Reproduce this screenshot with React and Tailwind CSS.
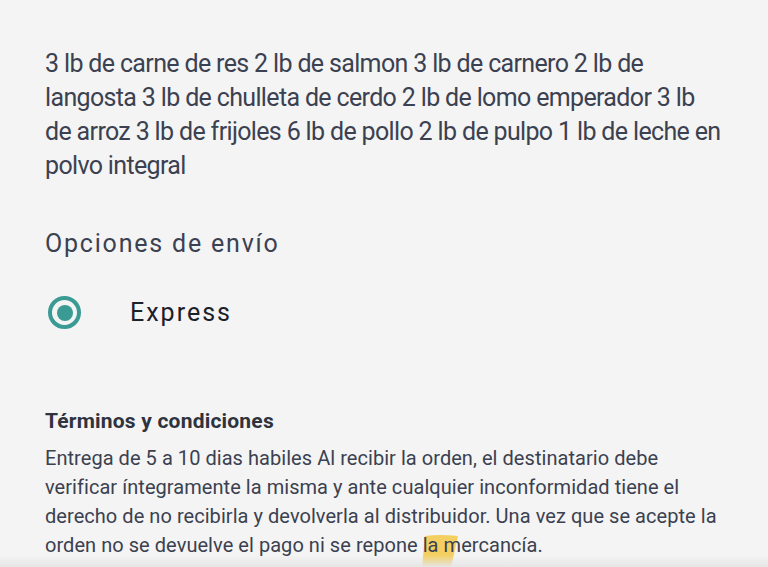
export default function App() {
  return (
    <div className="relative w-[768px] h-[567px] overflow-hidden bg-[#f4f4f4]" style={{ fontFamily: 'Roboto, "Noto Sans", sans-serif' }}>
      <svg className="absolute left-[418px] top-[534px]" width="45" height="33" viewBox="0 0 45 33">
        <path d="M7 2 Q22 0 40 2 L33 33 L4 33 Z" fill="#f2c53d" fillOpacity="0.8" />
      </svg>
      <div className="relative pl-[45px] pr-[44px] pt-[47px]">
        <p className="text-[25px] leading-[34px] text-[#3b4150] tracking-[-0.65px]">
          3 lb de carne de res 2 lb de salmon 3 lb de carnero 2 lb de langosta 3 lb de chulleta de cerdo 2 lb de lomo emperador 3 lb de arroz 3 lb de frijoles 6 lb de pollo 2 lb de pulpo 1 lb de leche en polvo integral
        </p>
        <h2 className="mt-[46px] text-[25px] leading-[30px] tracking-[1.8px] text-[#3b4150]">Opciones de envío</h2>
        <div className="mt-[37px] flex items-center">
          <div className="w-[33px] h-[33px] ml-[3px] rounded-full border-[4px] border-[#3a9a94] flex items-center justify-center">
            <div className="w-[16px] h-[16px] rounded-full bg-[#3a9a94]" />
          </div>
          <span className="ml-[49px] text-[25px] leading-[30px] tracking-[2px] text-[#1c2029]">Express</span>
        </div>
        <h3 className="mt-[79px] text-[21px] leading-[26px] font-bold tracking-[0.2px] text-[#2e333d]">Términos y condiciones</h3>
        <p className="mt-[10px] text-[20px] leading-[29px] text-[#3b4150] tracking-[0.05px]">
          Entrega de 5 a 10 dias habiles Al recibir la orden, el destinatario debe verificar íntegramente la misma y ante cualquier inconformidad tiene el derecho de no recibirla y devolverla al distribuidor. Una vez que se acepte la orden no se devuelve el pago ni se repone la mercancía.
        </p>
      </div>
      <div className="absolute left-0 right-0 bottom-0 h-[12px] bg-gradient-to-b from-transparent to-[#e6e6e6]" />
    </div>
  );
}
